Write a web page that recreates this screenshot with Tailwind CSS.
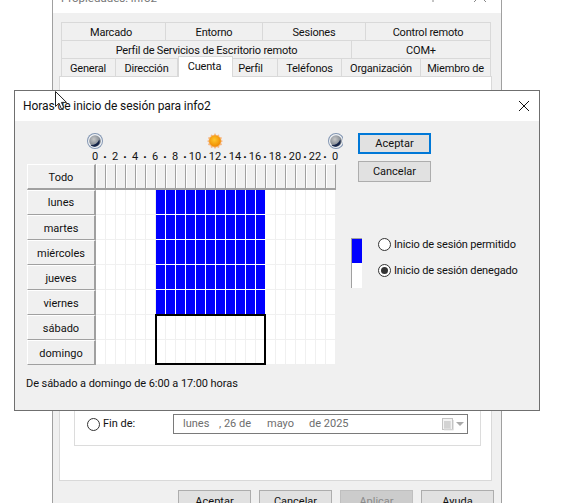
<!DOCTYPE html>
<html lang="es">
<head>
<meta charset="utf-8">
<script src="https://cdn.jsdelivr.net/npm/@tailwindcss/browser@4"></script>
</head>
<body class="bg-white">
<div class="relative w-[562px] h-[503px] overflow-hidden bg-white font-['Roboto','Liberation_Sans',sans-serif] text-[11px] leading-[16px] text-[#111]">

  <!-- Back window -->
  <div class="absolute left-[52px] top-0 w-[450px] h-[520px] bg-[#f0f0f0] border-x border-[#a0a0a0]">
    <div class="relative h-[13px] bg-white overflow-hidden">
      <span class="absolute left-[8px] top-[-10px] text-[#777] text-[11.500px]">Propiedades: info2</span>
      <svg class="absolute left-[379px] top-0" width="60" height="3" viewBox="0 0 60 3"><path d="M1 0v2M42 2l3-3M54 2l-3-3" stroke="#888" fill="none"/></svg>
    </div>
    <div class="ml-[8px] mt-[9px] w-[430px] text-center relative z-10 tracking-[-0.2px]">
      <div class="flex h-[18px] border-t border-l border-[#d9d9d9] [&>div]:border-r [&>div]:border-[#d9d9d9] [&>div]:pt-[2px]">
        <div class="w-[104px] pr-[5px]">Marcado</div>
        <div class="w-[97px]">Entorno</div>
        <div class="w-[103px]">Sesiones</div>
        <div class="flex-1">Control remoto</div>
      </div>
      <div class="flex h-[18px] border-t border-l border-[#d9d9d9] [&>div]:border-r [&>div]:border-[#d9d9d9] [&>div]:pt-[2px]">
        <div class="w-[290px]">Perfil de Servicios de Escritorio remoto</div>
        <div class="flex-1">COM+</div>
      </div>
      <div class="flex h-[18px] border-t border-l border-[#d9d9d9] [&>div]:border-r [&>div]:border-[#d9d9d9] [&>div]:pt-[2px]">
        <div class="w-[54px] pr-[1px]">General</div>
        <div class="w-[62px]">Dirección</div>
        <div class="w-[55px] h-[21px] mt-[-3px] pr-[2px] bg-white border-t border-l border-[#d9d9d9] relative z-10">Cuenta</div>
        <div class="w-[45px] pr-[9px]">Perfil</div>
        <div class="w-[64px]">Teléfonos</div>
        <div class="w-[79px]">Organización</div>
        <div class="flex-1">Miembro de</div>
      </div>
    </div>
    <div class="ml-[6px] w-[433px] h-[405px] bg-white border border-[#d9d9d9] flex flex-col justify-end pb-[34px] px-[14px]">
      <div class="w-[407px] h-[100px] border border-[#dcdcdc] flex items-end pb-[11px] pl-[12px]">
        <div class="flex items-center h-[20px] w-[86px] gap-[3px]">
          <span class="w-[13px] h-[13px] rounded-full border border-[#333] bg-white"></span>
          <span>Fin de:</span>
        </div>
        <div class="w-[295px] h-[20px] border border-[#7a7a7a] flex items-center pl-[9px] text-[#6d6d6d]">
          <span class="w-[36px]">lunes</span>
          <span class="w-[48px]">, 26 de</span>
          <span class="w-[42px]">mayo</span>
          <span class="w-[133px]">de 2025</span>
          <svg width="12" height="13" viewBox="0 0 12 13"><rect x=".5" y=".5" width="10" height="11" fill="#f4f4f4" stroke="#c4c4c4"/><path d="M2 4h7M2 6h7M2 8h7M2 10h7M3 3v7M5 3v7M7 3v7" stroke="#c8c8c8"/><path d="M11.500 2v10H2" fill="none" stroke="#e4e4e4"/></svg>
          <svg class="ml-[2px]" width="8" height="4" viewBox="0 0 8 4"><path d="M0 0h8L4 4z" fill="#aaa"/></svg>
        </div>
      </div>
    </div>
    <div class="flex justify-end gap-[8px] pr-[7px] mt-[9px] [&>div]:w-[73px] [&>div]:h-[23px] [&>div]:text-center [&>div]:leading-[21px]">
      <div class="bg-[#e1e1e1] border border-[#adadad]">Aceptar</div>
      <div class="bg-[#e1e1e1] border border-[#adadad]">Cancelar</div>
      <div class="bg-[#cccccc] border border-[#bfbfbf] text-[#8a8a8a]">Aplicar</div>
      <div class="bg-[#e1e1e1] border border-[#adadad]">Ayuda</div>
    </div>
  </div>

  <!-- Dialog -->
  <div class="absolute left-[14px] top-[90px] w-[526px] h-[321px] bg-[#f0f0f0] border border-[#6f6f6f] z-20">
    <div class="h-[30px] bg-white flex items-center justify-between pl-[8px] pr-[10px] text-[#111]">
      <span class="text-[12px] tracking-[-0.08px]">Horas de inicio de sesión para info2</span>
      <svg width="10" height="10" viewBox="0 0 10 10"><path d="M0 0l10 10M10 0L0 10" stroke="#111" fill="none"/></svg>
    </div>
    <div class="flex">
      <div class="ml-[12px] mt-[12px] w-[309px] shrink-0">
        <!-- icons -->
        <div class="flex h-[17px] items-start">
          <svg class="ml-[60px] shrink-0" width="16" height="16" viewBox="0 0 16 16"><defs><radialGradient id="m1" cx=".4" cy=".35" r=".7"><stop offset="0" stop-color="#c8c8c8"/><stop offset=".6" stop-color="#8f959c"/><stop offset="1" stop-color="#6d7480"/></radialGradient></defs><circle cx="8" cy="8" r="8" fill="#8396b2"/><circle cx="8" cy="8" r="7" fill="#f2f4f7"/><circle cx="8" cy="8" r="5.800" fill="url(#m1)"/><path d="M3.500 12c4 .2 7-1.500 8.800-5.500 1.200 3.500-.8 6.500-4.300 7.200-1.800.2-3.500-.4-4.500-1.700z" fill="#16264a"/></svg>
          <svg class="ml-[104px] shrink-0" width="16" height="16" viewBox="0 0 16 16"><defs><radialGradient id="s1" cx=".45" cy=".4" r=".6"><stop offset="0" stop-color="#ffc72c"/><stop offset="1" stop-color="#ef8a00"/></radialGradient></defs><path d="M8 0l1.500 2.500L12 1.500l.5 2.500L15 4.500 14 7l2 1-2 1.500L15 12l-2.500.5L12 15l-2.500-1L8 16l-1.500-2L4 15l-.5-2.500L1 12l1-2.500L0 8l2-1-1-2.500L3.500 4 4 1.500l2.500 1z" fill="#f6b57c"/><circle cx="8" cy="8" r="5.800" fill="url(#s1)"/></svg>
          <svg class="ml-[105px] shrink-0" width="15" height="16" viewBox="0 0 15 16"><defs><radialGradient id="m2" cx=".4" cy=".35" r=".7"><stop offset="0" stop-color="#c8c8c8"/><stop offset=".6" stop-color="#8f959c"/><stop offset="1" stop-color="#6d7480"/></radialGradient></defs><circle cx="8" cy="8" r="8" fill="#8396b2"/><circle cx="8" cy="8" r="7" fill="#f2f4f7"/><circle cx="8" cy="8" r="5.800" fill="url(#m2)"/><path d="M3.500 12c4 .2 7-1.500 8.800-5.500 1.200 3.500-.8 6.500-4.300 7.200-1.800.2-3.500-.4-4.500-1.700z" fill="#16264a"/></svg>
        </div>
        <!-- hour labels -->
        <div class="flex h-[14px] ml-[63px] w-[250px] items-center leading-[14px] [&>span]:w-[10px] [&>span]:shrink-0 [&>span]:flex [&>span]:justify-center [&>span]:whitespace-nowrap">
          <span>0</span><span class="font-bold text-[13px]">·</span><span>2</span><span class="font-bold text-[13px]">·</span><span>4</span><span class="font-bold text-[13px]">·</span><span>6</span><span class="font-bold text-[13px]">·</span><span>8</span><span class="font-bold text-[13px]">·</span><span>10</span><span class="font-bold text-[13px]">·</span><span>12</span><span class="font-bold text-[13px]">·</span><span>14</span><span class="font-bold text-[13px]">·</span><span>16</span><span class="font-bold text-[13px]">·</span><span>18</span><span class="font-bold text-[13px]">·</span><span>20</span><span class="font-bold text-[13px]">·</span><span>22</span><span class="font-bold text-[13px]">·</span><span>0</span>
        </div>
        <!-- grid -->
        <div class="flex relative">
          <div class="w-[69px] flex flex-col text-center [&>div]:h-[25px] [&>div]:leading-[25px] [&>div]:border-r-2 [&>div]:border-b [&>div]:border-t [&>div]:border-l [&>div]:border-t-white [&>div]:border-l-white [&>div]:border-r-[#a0a0a0] [&>div]:border-b-[#a0a0a0]">
            <div class="!h-[26px] !border-b-2">Todo</div>
            <div class="!leading-[23px]">lunes</div>
            <div>martes</div>
            <div>miércoles</div>
            <div>jueves</div>
            <div>viernes</div>
            <div>sábado</div>
            <div>domingo</div>
          </div>
          <div class="w-[240px]">
            <div class="grid grid-cols-[repeat(24,10px)] h-[26px] border-b-2 border-[#a0a0a0] [&>i]:border-r [&>i]:border-l [&>i]:border-t [&>i]:border-t-white [&>i]:border-l-white [&>i]:border-r-[#a0a0a0]">
              <i></i><i></i><i></i><i></i><i></i><i></i><i></i><i></i><i></i><i></i><i></i><i></i><i></i><i></i><i></i><i></i><i></i><i></i><i></i><i></i><i></i><i></i><i></i><i></i>
            </div>
            <div class="grid grid-cols-[repeat(24,10px)] auto-rows-[25px] bg-white [&>i]:border-r [&>i]:border-b [&>i]:border-[#f0f0f0] [&>b]:bg-[#0000ff] [&>b]:border-r [&>b]:border-b [&>b]:border-white">
              <i></i><i></i><i></i><i></i><i></i><i></i><b></b><b></b><b></b><b></b><b></b><b></b><b></b><b></b><b></b><b></b><b></b><i></i><i></i><i></i><i></i><i></i><i></i><i></i>
              <i></i><i></i><i></i><i></i><i></i><i></i><b></b><b></b><b></b><b></b><b></b><b></b><b></b><b></b><b></b><b></b><b></b><i></i><i></i><i></i><i></i><i></i><i></i><i></i>
              <i></i><i></i><i></i><i></i><i></i><i></i><b></b><b></b><b></b><b></b><b></b><b></b><b></b><b></b><b></b><b></b><b></b><i></i><i></i><i></i><i></i><i></i><i></i><i></i>
              <i></i><i></i><i></i><i></i><i></i><i></i><b></b><b></b><b></b><b></b><b></b><b></b><b></b><b></b><b></b><b></b><b></b><i></i><i></i><i></i><i></i><i></i><i></i><i></i>
              <i></i><i></i><i></i><i></i><i></i><i></i><b></b><b></b><b></b><b></b><b></b><b></b><b></b><b></b><b></b><b></b><b></b><i></i><i></i><i></i><i></i><i></i><i></i><i></i>
              <i></i><i></i><i></i><i></i><i></i><i></i><i></i><i></i><i></i><i></i><i></i><i></i><i></i><i></i><i></i><i></i><i></i><i></i><i></i><i></i><i></i><i></i><i></i><i></i>
              <i></i><i></i><i></i><i></i><i></i><i></i><i></i><i></i><i></i><i></i><i></i><i></i><i></i><i></i><i></i><i></i><i></i><i></i><i></i><i></i><i></i><i></i><i></i><i></i>
            </div>
          </div>
          <!-- selection rectangle -->
          <div class="absolute left-[128px] top-[150px] w-[111px] h-[51px] border-2 border-black"></div>
        </div>
        <div class="-ml-[1px] mt-[11px] tracking-[-0.07px]">De sábado a domingo de 6:00 a 17:00 horas</div>
      </div>
      <!-- right column -->
      <div class="ml-[15px]">
        <div class="ml-[7px] mt-[12px] w-[73px] h-[21px] bg-[#e1e1e1] border-2 border-[#0078d7] text-center leading-[17px]">Aceptar</div>
        <div class="ml-[7px] mt-[7px] w-[73px] h-[21px] bg-[#e1e1e1] border border-[#adadad] text-center leading-[19px]">Cancelar</div>
        <div class="flex mt-[56px] gap-[16px]">
          <div class="w-[11px] h-[50px] flex flex-col border-l border-t border-[#a0a0a0] bg-white">
            <div class="h-[24px] bg-[#0000ff]"></div>
          </div>
          <div class="flex flex-col gap-[13px] tracking-[-0.15px]">
            <div class="flex items-center h-[13px] gap-[3px]">
              <span class="w-[13px] h-[13px] rounded-full border border-[#333] bg-white"></span>
              <span>Inicio de sesión permitido</span>
            </div>
            <div class="flex items-center h-[13px] gap-[3px]">
              <span class="w-[13px] h-[13px] rounded-full border border-[#333] bg-white flex items-center justify-center"><span class="w-[7px] h-[7px] rounded-full bg-[#333]"></span></span>
              <span>Inicio de sesión denegado</span>
            </div>
          </div>
        </div>
      </div>
    </div>
  </div>

  <!-- Mouse cursor -->
  <svg class="absolute left-[55px] top-[91px] z-30" width="13" height="20" viewBox="0 0 13 20"><path d="M.5.500v15l3.500-3.300 2.300 5.500 2.500-1-2.300-5.300h5z" fill="#fff" stroke="#222"/></svg>
</div>
</body>
</html>
